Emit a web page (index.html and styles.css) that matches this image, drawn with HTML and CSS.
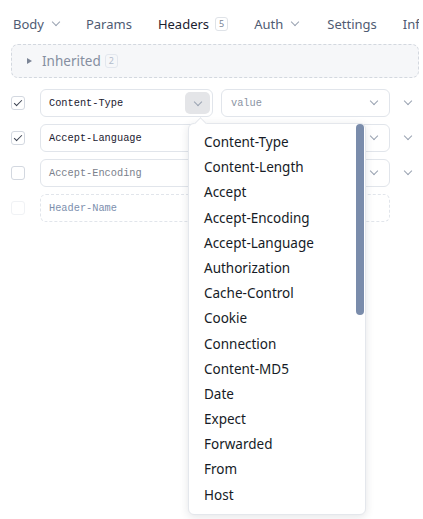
FILE: index.html
```html
<!DOCTYPE html>
<html>
<head>
    <title>Headers</title>
    <link rel="stylesheet" href="styles.css">
</head>
<body>
<div class="page">
    <div class="tabs">
        <div class="tab">Body <span class="chev"></span></div>
        <div class="tab">Params</div>
        <div class="tab active">Headers <span class="count">5</span></div>
        <div class="tab auth">Auth <span class="chev"></span></div>
        <div class="tab">Settings</div>
        <div class="tab">Info</div>
    </div>

    <div class="inherited">
        <span class="tri"></span>
        <span class="inh-label">Inherited</span>
        <span class="count small">2</span>
    </div>

    <div class="rows">
        <div class="row">
            <span class="check on"></span>
            <div class="field name">
                <span class="txt">Content-Type</span>
                <span class="drop open"><span class="chev"></span></span>
            </div>
            <div class="field value">
                <span class="txt ph">value</span>
                <span class="chev"></span>
            </div>
            <span class="chev trail"></span>
        </div>
        <div class="row">
            <span class="check on"></span>
            <div class="field name"><span class="txt">Accept-Language</span></div>
            <div class="field value">
                <span class="txt ph"></span>
                <span class="chev"></span>
            </div>
            <span class="chev trail"></span>
        </div>
        <div class="row">
            <span class="check"></span>
            <div class="field name"><span class="txt dim">Accept-Encoding</span></div>
            <div class="field value">
                <span class="txt ph"></span>
                <span class="chev"></span>
            </div>
            <span class="chev trail"></span>
        </div>
        <div class="row">
            <span class="check faint"></span>
            <div class="field name dashed"><span class="txt ph2">Header-Name</span></div>
            <div class="field value dashed"></div>
            <span class="trail-empty"></span>
        </div>
    </div>

    <div class="popup">
        <span class="notch"></span>
        <ul class="options">
            <li>Content-Type</li>
            <li>Content-Length</li>
            <li>Accept</li>
            <li>Accept-Encoding</li>
            <li>Accept-Language</li>
            <li>Authorization</li>
            <li>Cache-Control</li>
            <li>Cookie</li>
            <li>Connection</li>
            <li>Content-MD5</li>
            <li>Date</li>
            <li>Expect</li>
            <li>Forwarded</li>
            <li>From</li>
            <li>Host</li>
        </ul>
        <span class="thumb"></span>
    </div>
</div>
</body>
</html>
```

FILE: styles.css
```css
body {
    margin: 0;
    background-color: #ffffff;
    font-family: 'Noto Sans', 'Open Sans', sans-serif;
    color: #1d2433;
    overflow: hidden;
}
.page {
    position: relative;
    width: 423px;
    height: 519px;
    padding: 0 4px 0 11px;
    box-sizing: border-box;
}
.tabs {
    display: flex;
    align-items: center;
    gap: 26px;
    height: 44px;
    box-sizing: border-box;
    padding: 3px 0 0 2px;
    overflow: hidden;
    white-space: nowrap;
    font-size: 13px;
}
.tab {
    display: flex;
    align-items: center;
    gap: 9px;
    color: #4f5b73;
    flex-shrink: 0;
}
.tab.active {
    color: #1b2130;
    gap: 6px;
}
.tab:first-child {
    margin-right: 1px;
}
.tab.auth {
    margin-right: 3px;
}
.chev {
    display: inline-block;
    width: 5px;
    height: 5px;
    border-right: 1px solid #9aa3b2;
    border-bottom: 1px solid #9aa3b2;
    transform: translateY(-2px) rotate(45deg);
}
.count {
    display: inline-block;
    font-size: 9px;
    line-height: 12px;
    padding: 0 3px;
    min-width: 5px;
    text-align: center;
    border: 1px solid #dfe3e8;
    border-radius: 3px;
    color: #7a8496;
}
.count.small {
    color: #b3bccb;
    border-color: #e3e7ee;
}
.inherited {
    display: flex;
    align-items: center;
    height: 34px;
    box-sizing: border-box;
    border: 1px dashed #d3d8df;
    border-radius: 7px;
    background-color: #f6f7f9;
    padding-left: 15px;
}
.tri {
    width: 0;
    height: 0;
    border-left: 5px solid #7c8596;
    border-top: 3px solid transparent;
    border-bottom: 3px solid transparent;
    margin-right: 10px;
}
.inh-label {
    font-size: 13.5px;
    color: #858ea0;
    margin-right: 4px;
}
.rows {
    display: flex;
    flex-direction: column;
    gap: 7px;
    margin-top: 11px;
}
.row {
    display: flex;
    align-items: center;
    height: 28px;
}
.check {
    width: 12px;
    height: 12px;
    border: 1px solid #d3d8e0;
    border-radius: 3px;
    margin-right: 15px;
    position: relative;
}
.check.on::after {
    content: "";
    position: absolute;
    left: 4px;
    top: 1px;
    width: 3px;
    height: 7px;
    border-right: 1.3px solid #3a4150;
    border-bottom: 1.3px solid #3a4150;
    transform: rotate(45deg);
}
.check.faint {
    border-color: #f0f2f5;
}
.field {
    display: flex;
    align-items: center;
    height: 28px;
    box-sizing: border-box;
    border: 1px solid #e1e5eb;
    border-radius: 6px;
    padding-left: 8px;
    padding-right: 12px;
    font-family: 'Liberation Mono', 'DejaVu Sans Mono', monospace;
    font-size: 10.3px;
}
.field.dashed {
    border-style: dashed;
}
.name {
    width: 173px;
    margin-right: 8px;
    padding-right: 2px;
}
.value {
    width: 169px;
    padding-left: 9px;
}
.txt {
    flex: 1;
    color: #1b2130;
}
.txt.dim {
    color: #7b818c;
}
.txt.ph {
    color: #8a93a3;
}
.txt.ph2 {
    color: #7d8fae;
}
.drop {
    display: flex;
    align-items: center;
    justify-content: center;
    width: 25px;
    height: 22px;
    border-radius: 5px;
    background-color: #e4e5e8;
}
.drop .chev {
    transform: translateY(-1px) rotate(45deg);
}
.trail {
    margin-left: 15px;
}
.popup {
    position: absolute;
    left: 188px;
    top: 123px;
    width: 178px;
    height: 392px;
    background-color: #ffffff;
    border: 1px solid #e4e7ec;
    border-radius: 6px;
    box-sizing: border-box;
    box-shadow: 0 2px 8px rgba(30, 40, 60, 0.12);
}
.notch {
    position: absolute;
    left: 7px;
    top: -5px;
    width: 8px;
    height: 8px;
    background-color: #ffffff;
    border-left: 1px solid #e4e7ec;
    border-top: 1px solid #e4e7ec;
    transform: rotate(45deg);
}
.options {
    list-style: none;
    margin: 0;
    padding: 6px 0 0 15px;
    font-family: 'Noto Sans', 'Open Sans', sans-serif;
    font-size: 13.5px;
    color: #161b26;
}
.options li {
    height: 25.2px;
    line-height: 25.2px;
}
.thumb {
    position: absolute;
    right: 1px;
    top: 0;
    width: 8px;
    height: 191px;
    border-radius: 4px;
    background-color: #7a8cab;
}
```
